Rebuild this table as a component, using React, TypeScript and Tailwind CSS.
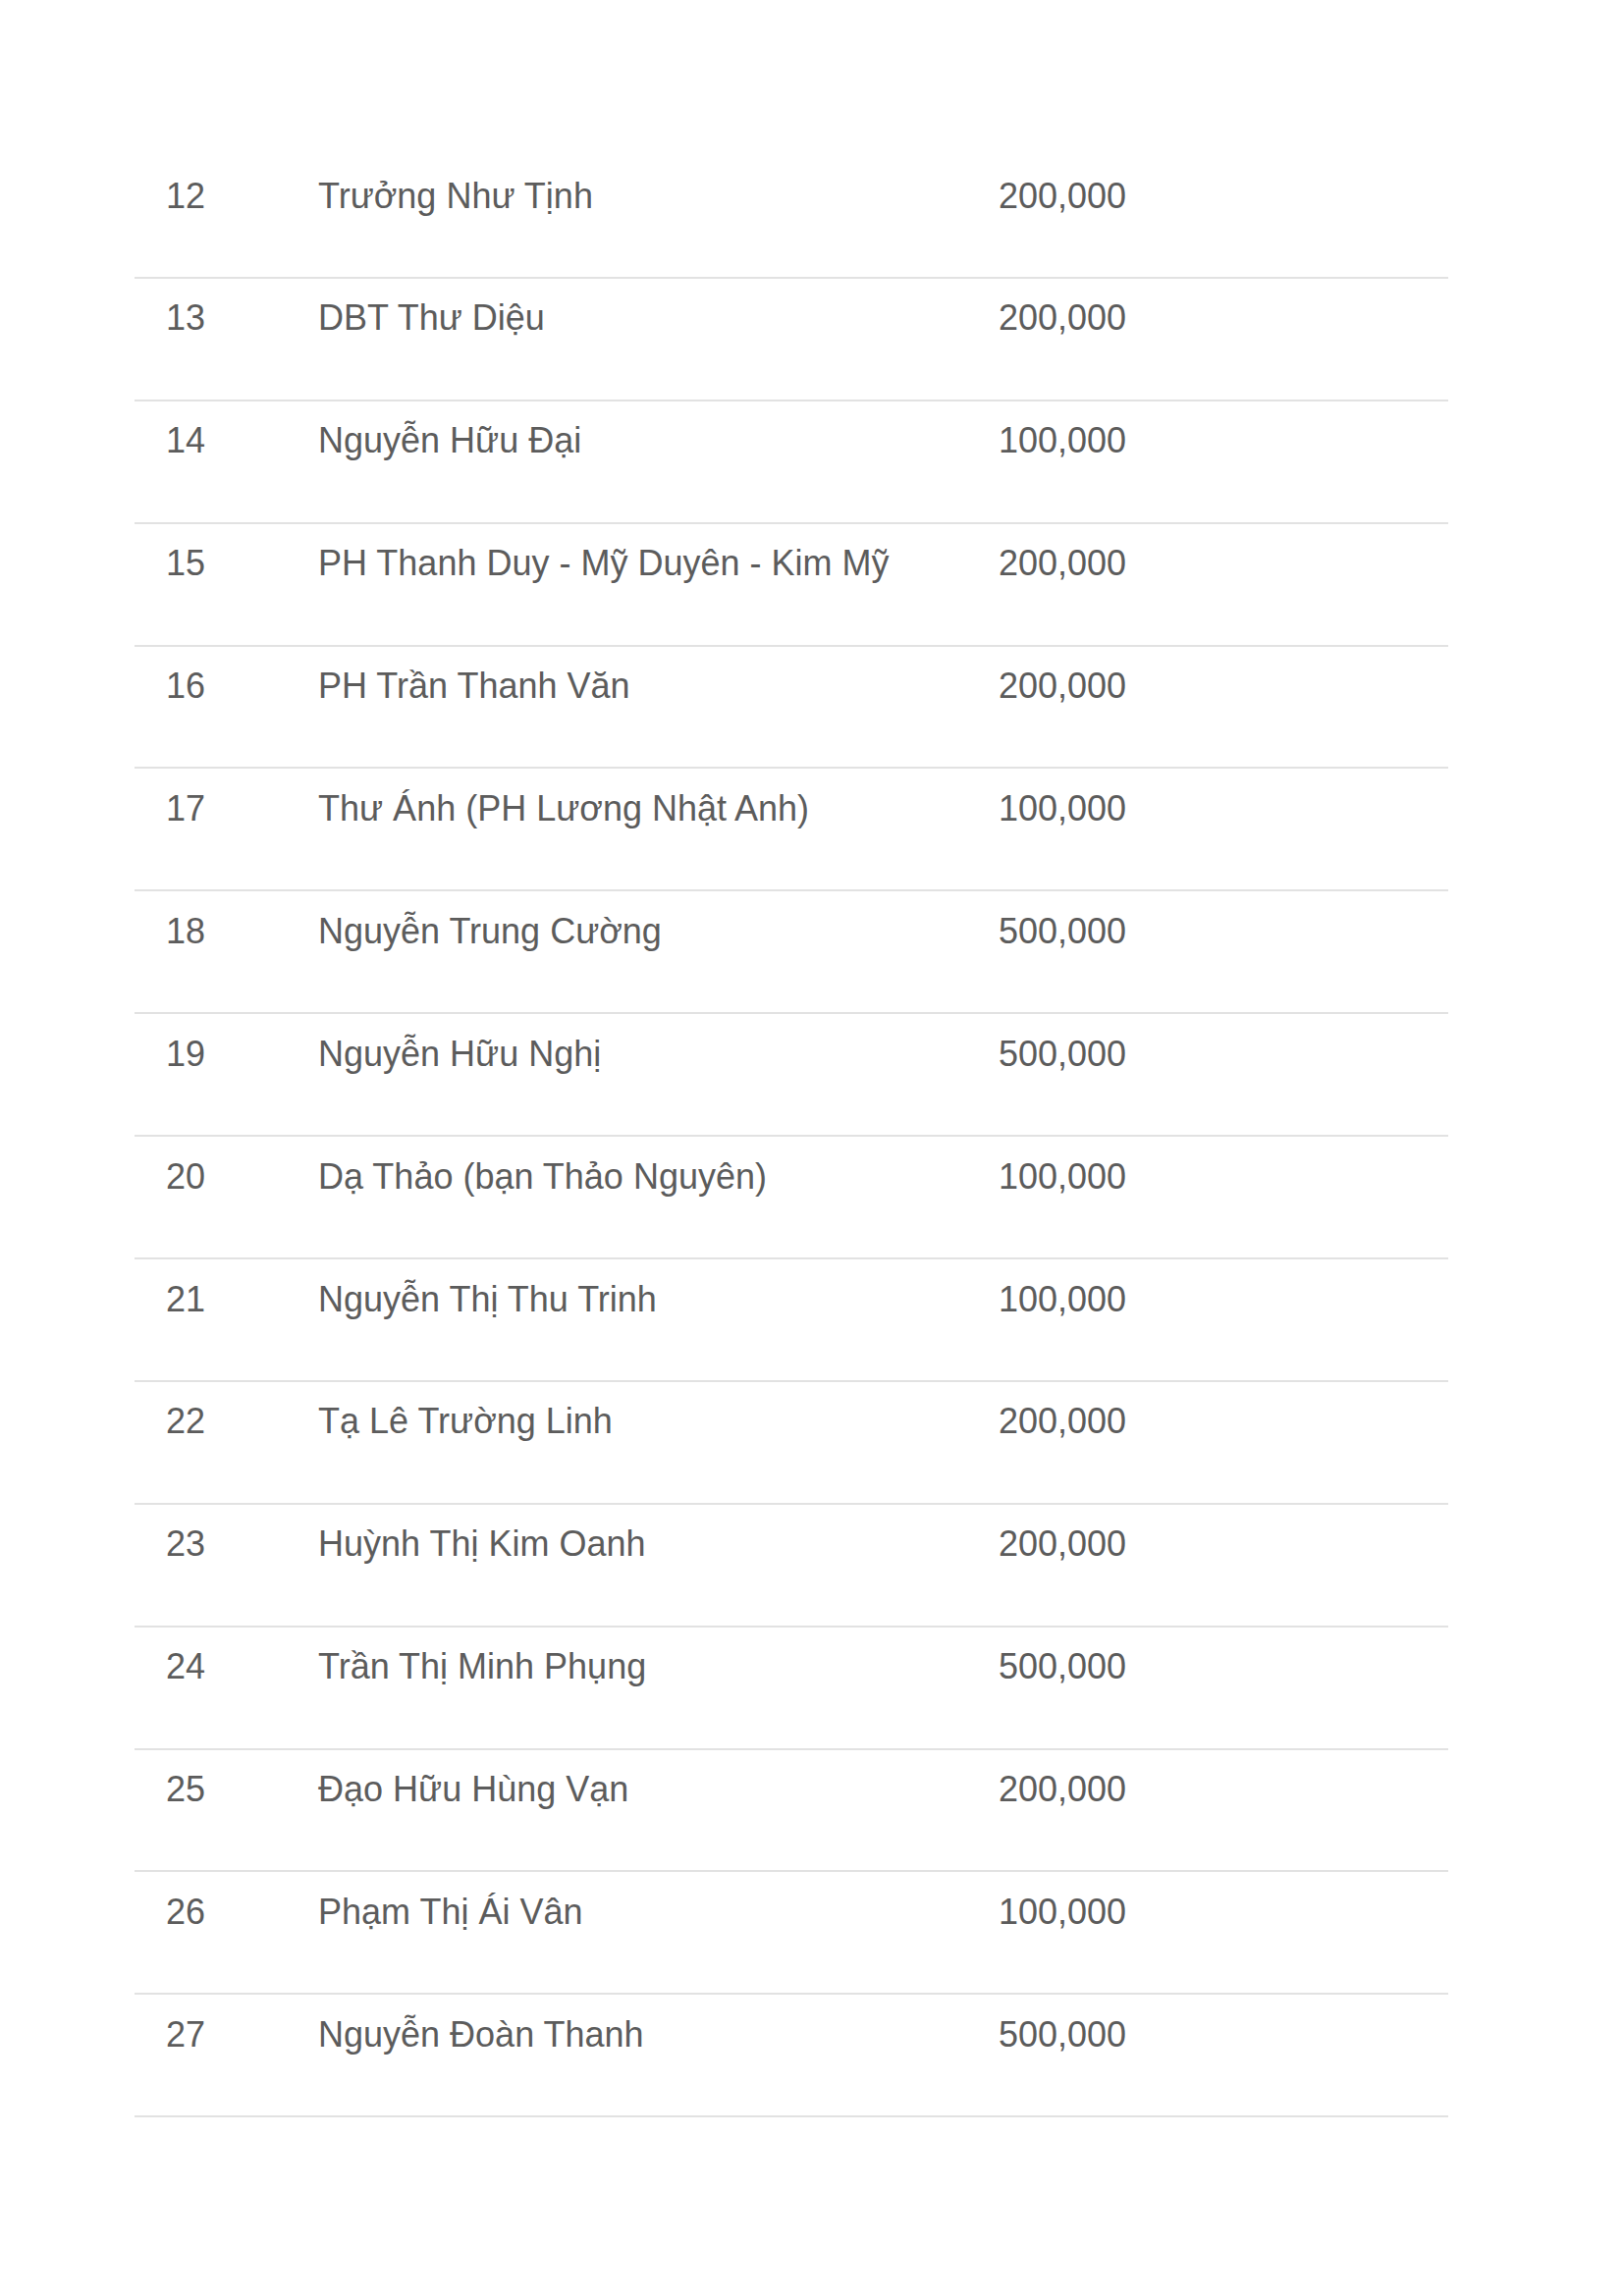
const rows: [string, string, string][] = [
  ["12", "Trưởng Như Tịnh", "200,000"],
  ["13", "DBT Thư Diệu", "200,000"],
  ["14", "Nguyễn Hữu Đại", "100,000"],
  ["15", "PH Thanh Duy - Mỹ Duyên - Kim Mỹ", "200,000"],
  ["16", "PH Trần Thanh Văn", "200,000"],
  ["17", "Thư Ánh (PH Lương Nhật Anh)", "100,000"],
  ["18", "Nguyễn Trung Cường", "500,000"],
  ["19", "Nguyễn Hữu Nghị", "500,000"],
  ["20", "Dạ Thảo (bạn Thảo Nguyên)", "100,000"],
  ["21", "Nguyễn Thị Thu Trinh", "100,000"],
  ["22", "Tạ Lê Trường Linh", "200,000"],
  ["23", "Huỳnh Thị Kim Oanh", "200,000"],
  ["24", "Trần Thị Minh Phụng", "500,000"],
  ["25", "Đạo Hữu Hùng Vạn", "200,000"],
  ["26", "Phạm Thị Ái Vân", "100,000"],
  ["27", "Nguyễn Đoàn Thanh", "500,000"],
];

export default function App() {
  return (
    <div
      className="min-h-[2339px] w-[1654px] bg-white pl-[137px] pt-[159px] text-[#5c5c5c]"
      style={{ fontFamily: '"Liberation Sans", Arial, sans-serif' }}
    >
      <div className="w-[1338px]">
        {rows.map(([no, name, amount]) => (
          <div
            key={no}
            className="flex h-[124.9px] border-b-2 border-[#e2e2e2] pl-[32px] pt-[19.5px] text-[36px] leading-[41px]"
          >
            {/* STT */}
            <div className="w-[155px] shrink-0">{no}</div>
            {/* Ho ten */}
            <div className="w-[693px] shrink-0 whitespace-nowrap">{name}</div>
            {/* So tien */}
            <div>{amount}</div>
          </div>
        ))}
      </div>
    </div>
  );
}
